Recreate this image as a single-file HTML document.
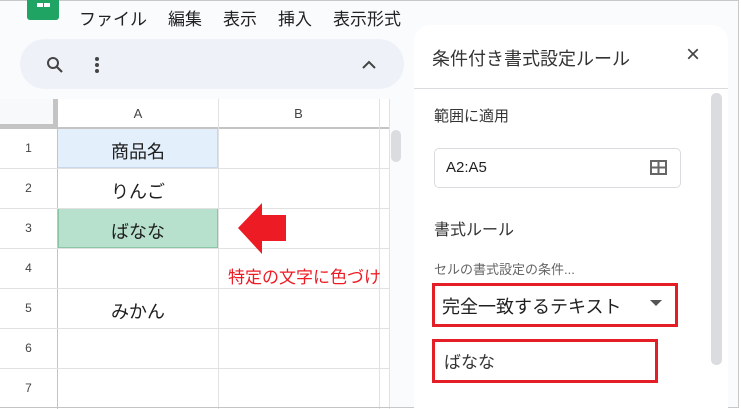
<!DOCTYPE html>
<html><head><meta charset="utf-8"><style>
*{margin:0;padding:0;box-sizing:border-box}
body{width:741px;height:409px;overflow:hidden;background:#fff;font-family:"Liberation Sans","Noto Sans CJK JP",sans-serif;position:relative}
.a{position:absolute}
.frame{left:0;top:0;width:739px;height:408px;border:1px solid #c8c8c8;border-left:none;background:#f9fbfd}
.t{white-space:nowrap;color:#1f1f1f}
.m{position:absolute;top:5px;font-size:17px;color:#222;white-space:nowrap}
</style></head><body>
<div class="a frame"></div>
<div class="a" style="left:27px;top:0;width:32px;height:20px;background:#1fa463;border-radius:0 0 3px 3px"></div>
<div class="a" style="left:37px;top:3px;width:6px;height:4px;background:#fff"></div>
<div class="a" style="left:44px;top:3px;width:6px;height:4px;background:#fff"></div>
<div class="m" style="left:79px">ファイル</div>
<div class="m" style="left:168px">編集</div>
<div class="m" style="left:223px">表示</div>
<div class="m" style="left:278px">挿入</div>
<div class="m" style="left:333px">表示形式</div>
<div class="a" style="left:20px;top:39px;width:384px;height:50px;background:#eef2f8;border-radius:25px"></div>
<svg class="a" style="left:44px;top:54px" width="22" height="22" viewBox="0 0 22 22"><circle cx="9" cy="9" r="5" fill="none" stroke="#444" stroke-width="2"/><path d="M13 13l5 5" stroke="#444" stroke-width="2.2"/></svg>
<div class="a" style="left:95px;top:57px;width:4px;height:4px;border-radius:2px;background:#444;box-shadow:0 6px 0 #444,0 12px 0 #444"></div>
<svg class="a" style="left:361px;top:59px" width="16" height="12"><path d="M2 9l6-6 6 6" fill="none" stroke="#444" stroke-width="2"/></svg>
<div class="a" style="left:0;top:99px;width:390px;height:310px;background:#fff"></div>
<div class="a" style="left:0;top:99px;width:57px;height:29px;background:#f8f9fa;border-right:4px solid #c4c4c4;border-bottom:4px solid #c4c4c4"></div>
<div class="a" style="left:57px;top:99px;width:1px;height:310px;background:#c4c4c4"></div>
<div class="a" style="left:0;top:127px;width:390px;height:2px;background:#c4c4c4"></div>
<div class="a" style="left:218px;top:99px;width:1px;height:310px;background:#e1e1e1"></div>
<div class="a" style="left:379px;top:99px;width:1px;height:310px;background:#e1e1e1"></div>
<div class="a" style="left:389px;top:99px;width:1px;height:310px;background:#e1e1e1"></div>
<div class="a" style="left:391px;top:130px;width:10px;height:32px;background:#dadce0;border-radius:5px"></div>
<div class="a t" style="left:58px;top:106px;width:160px;text-align:center;font-size:13px;color:#444">A</div>
<div class="a t" style="left:218px;top:106px;width:161px;text-align:center;font-size:13px;color:#444">B</div>
<div class="a" style="left:58px;top:129px;width:160px;height:39px;background:#e3effb;border-right:1px solid #c8d8ea;border-bottom:1px solid #c8d8ea"></div>
<div class="a" style="left:58px;top:208px;width:160px;height:40px;background:#b7e1cd;border:1px solid #8cc5a6"></div>
<div class="a" style="left:0;top:168px;width:390px;height:1px;background:#e1e1e1"></div>
<div class="a" style="left:0;top:208px;width:390px;height:1px;background:#e1e1e1"></div>
<div class="a" style="left:0;top:248px;width:390px;height:1px;background:#e1e1e1"></div>
<div class="a" style="left:0;top:288px;width:390px;height:1px;background:#e1e1e1"></div>
<div class="a" style="left:0;top:328px;width:390px;height:1px;background:#e1e1e1"></div>
<div class="a" style="left:0;top:368px;width:390px;height:1px;background:#e1e1e1"></div>
<div class="a" style="left:0;top:407px;width:390px;height:1px;background:#c4c4c4"></div>
<div class="a t" style="left:0;width:57px;text-align:center;font-size:12px;color:#444;line-height:40px;top:128px">1<br>2<br>3<br>4<br>5<br>6<br>7</div>
<div class="a t" style="left:58px;top:132px;width:160px;text-align:center;font-size:18px;line-height:40px">商品名<br>りんご<br>ばなな<br><br>みかん</div>
<svg class="a" style="left:236px;top:202px" width="52" height="54"><path d="M2 26L26 1V13H50V39H26V52Z" fill="#ed1c24"/></svg>
<div class="a t" style="left:228px;top:263px;font-size:17px;color:#ed1c24">特定の文字に色づけ</div>
<div class="a" style="left:414px;top:25px;width:314px;height:384px;background:#fff;border-radius:16px 16px 0 0"></div>
<div class="a t" style="left:432px;top:45px;font-size:18px;color:#333">条件付き書式設定ルール</div>
<div class="a t" style="left:686px;top:41px;font-size:24px;color:#444">×</div>
<div class="a" style="left:414px;top:88px;width:314px;height:1px;background:#dadce0"></div>
<div class="a" style="left:711px;top:93px;width:11px;height:272px;background:#dadce0;border-radius:5px"></div>
<div class="a t" style="left:434px;top:105px;font-size:15px;color:#333">範囲に適用</div>
<div class="a" style="left:434px;top:148px;width:247px;height:40px;border:1px solid #dadce0;border-radius:5px"></div>
<div class="a t" style="left:446px;top:159px;font-size:15px">A2:A5</div>
<svg class="a" style="left:650px;top:160px" width="17" height="15"><rect x="1" y="1" width="15" height="13" fill="none" stroke="#666" stroke-width="2"/><path d="M8.5 1v13M1 7.5h15" stroke="#666" stroke-width="2"/></svg>
<div class="a t" style="left:434px;top:216px;font-size:16px;color:#333">書式ルール</div>
<div class="a t" style="left:434px;top:259px;font-size:13px;color:#666">セルの書式設定の条件...</div>
<div class="a" style="left:432px;top:283px;width:246px;height:44px;border:3px solid #e31e26"></div>
<div class="a t" style="left:442px;top:293px;font-size:18px">完全一致するテキスト</div>
<svg class="a" style="left:650px;top:300px" width="12" height="7"><path d="M0 0h12L6 6z" fill="#555"/></svg>
<div class="a" style="left:432px;top:339px;width:226px;height:44px;border:3px solid #e31e26"></div>
<div class="a t" style="left:444px;top:348px;font-size:17px;color:#333">ばなな</div>
</body></html>
